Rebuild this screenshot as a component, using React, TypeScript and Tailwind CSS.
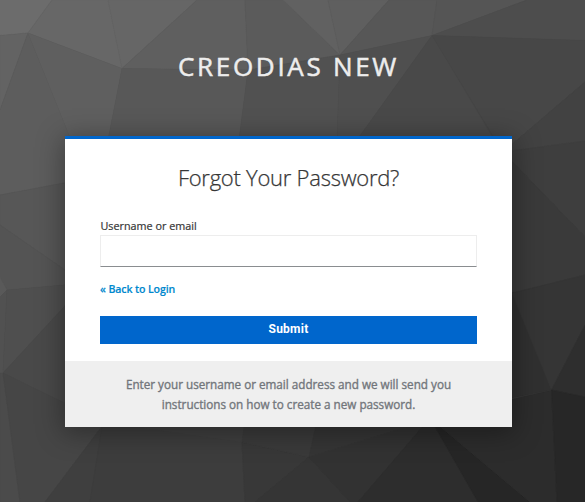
const facets: [string, string][] = [
  ["0,0 52,0 28,33 0,35.5", "#6c6c6c"],
  ["52,0 108,0 122,68.5 28,33", "#676767"],
  ["0,35.5 28,33 0,110", "#636363"],
  ["0,110 28,33 75,150 75,181 0,195", "#5d5d5d"],
  ["28,33 122,68.5 108,140 75,181 75,150", "#5f5f5f"],
  ["108,0 197,0 122,68.5", "#666666"],
  ["197,0 245,0 248,70 122,68.5", "#5f5f5f"],
  ["245,0 283,0 340,55 248,70", "#5b5b5b"],
  ["283,0 328,0 340,55", "#616161"],
  ["328,0 389,0 340,55", "#5f5f5f"],
  ["389,0 437,0 432,35.5 340,55", "#575757"],
  ["437,0 527,0 432,35.5", "#555555"],
  ["527,0 585,0 585,40.5 432,35.5", "#4d4d4d"],
  ["122,68.5 248,70 239,140 108,140", "#585858"],
  ["248,70 340,55 337,140 239,140", "#515151"],
  ["340,55 432,35.5 357,140 337,140", "#4f4f4f"],
  ["432,35.5 494,140 357,140", "#494949"],
  ["432,35.5 585,40.5 585,82 503,152", "#474747"],
  ["585,82 585,141 503,152", "#424242"],
  ["503,152 585,141 585,237", "#3e3e3e"],
  ["503,152 585,237 585,275 503,296", "#3a3a3a"],
  ["0,195 75,181 75,277 0,225", "#575757"],
  ["0,225 75,277 75,284 7,290 0,277", "#545454"],
  ["0,277 7,290 0,297", "#595959"],
  ["0,297 7,290 3,373 0,373", "#515151"],
  ["7,290 75,284 75,295 3,373", "#4f4f4f"],
  ["3,373 75,295 75,408", "#494949"],
  ["0,373 3,373 20,502 0,502", "#4b4b4b"],
  ["3,373 103,422 103,425 45,502 20,502", "#464646"],
  ["103,425 90,502 45,502", "#3f3f3f"],
  ["103,420 245,420 242,442 245,502 90,502", "#3d3d3d"],
  ["135,427 242,442 245,420", "#3f3f3f"],
  ["242,442 309,457 255,502 245,502", "#383838"],
  ["245,420 317,420 309,457 242,442", "#3a3a3a"],
  ["317,420 430,420 309,457", "#353535"],
  ["309,457 255,502 350,502", "#353535"],
  ["309,457 430,420 358,502 350,502", "#323232"],
  ["430,418 478,502 358,502", "#2d2d2d"],
  ["430,418 530,502 478,502", "#262626"],
  ["430,418 551.5,390 557,502 530,502", "#2c2c2c"],
  ["503,296 514,292 551.5,390 503,400", "#303030"],
  ["512,293 585,275 585,325 551.5,390", "#353535"],
  ["551.5,390 585,325 585,397", "#2e2e2e"],
  ["551.5,390 585,397 585,502 557,502", "#272727"],
];

function Backdrop() {
  return (
    <svg className="absolute inset-0 h-full w-full" viewBox="0 0 585 502" preserveAspectRatio="none" aria-hidden="true">
      {facets.map(([points, color]) => (
        <polygon key={points} points={points} fill={color} stroke={color} strokeWidth="0.5" />
      ))}
    </svg>
  );
}

export default function App() {
  return (
    <div className="relative h-[502px] w-[585px] overflow-hidden bg-[#444] font-['Open_Sans','Noto_Sans',sans-serif]">
      <Backdrop />
      <div className="relative flex flex-col">
        <header className="flex h-[136px] items-start justify-center pt-[47px] pr-[8px]">
          <h1 className="text-[26px] leading-[38px] tracking-[2.7px] whitespace-nowrap text-[#ededed] uppercase [-webkit-text-stroke:0.5px]">Creodias New</h1>
        </header>
        <main className="ml-[65px] flex w-[447px] flex-col border-t-[3px] border-[#0066cc] bg-white shadow-[0_4px_25px_2px_rgba(3,3,3,0.35)]">
          <h2 className="mt-[23px] text-center text-[22px] leading-[30px] font-light tracking-[-0.25px] text-[#363636] [-webkit-text-stroke:0.25px]">Forgot Your Password?</h2>
          <form className="mt-[26px] flex flex-col px-[35px]" onSubmit={(e) => e.preventDefault()}>
            <label htmlFor="username" className="h-[17px] pl-[0.5px] text-[10.8px] leading-[16px] text-[#363636] [-webkit-text-stroke:0.2px]">Username or email</label>
            <input
              id="username"
              type="text"
              className="h-[32px] border border-[#ededed] border-b-[#8a8d90] bg-white px-2 text-[12px] outline-none"
            />
            <a href="#" className="mt-[14px] self-start text-[10.6px] leading-[16px] font-semibold tracking-[-0.13px] text-[#0088ce] [-webkit-text-stroke:0.15px]">« Back to Login</a>
            <button type="submit" className="mt-[19px] flex h-[28px] justify-center bg-[#0066cc] font-[Roboto,sans-serif] text-[12px] leading-[26px] font-bold tracking-[0.25px] text-white">
              Submit
            </button>
          </form>
          <div className="mt-[17px] h-[66px] bg-[#efefef] px-[50px] pt-[13px] text-center text-[11.7px] leading-[20px] text-[#72767b] [-webkit-text-stroke:0.35px]">
            Enter your username or email address and we will send you instructions on how to create a new password.
          </div>
        </main>
      </div>
    </div>
  );
}
